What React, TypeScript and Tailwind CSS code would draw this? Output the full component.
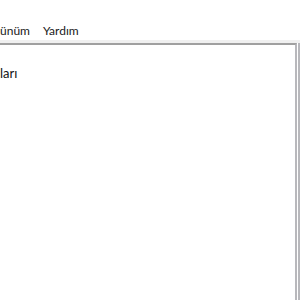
export default function App() {
  return (
    <div className="w-[300px] h-[300px] bg-white overflow-hidden flex flex-col" style={{ fontFamily: 'Lato, "Noto Sans", sans-serif' }}>
      <div className="h-[22px]" />
      <div className="h-[18px] flex items-center text-[12px] leading-[18px] text-[#1a1a1a]">
        <span>ünüm</span>
        <span className="ml-[13px]">Yardım</span>
      </div>
      <div className="h-[3px] bg-[#f0f0f0]" />
      <div className="flex-1 flex">
        <div className="flex-1 border-t-2 border-[#a0a0a0] border-r-2 border-r-[#b8b8bc] pt-[18px] text-[13px] leading-[20px] text-[#111]">
          ları
        </div>
        <div className="w-[1px] bg-white" />
        <div className="w-[2px] bg-[#b8b8bc]" />
      </div>
    </div>
  );
}
